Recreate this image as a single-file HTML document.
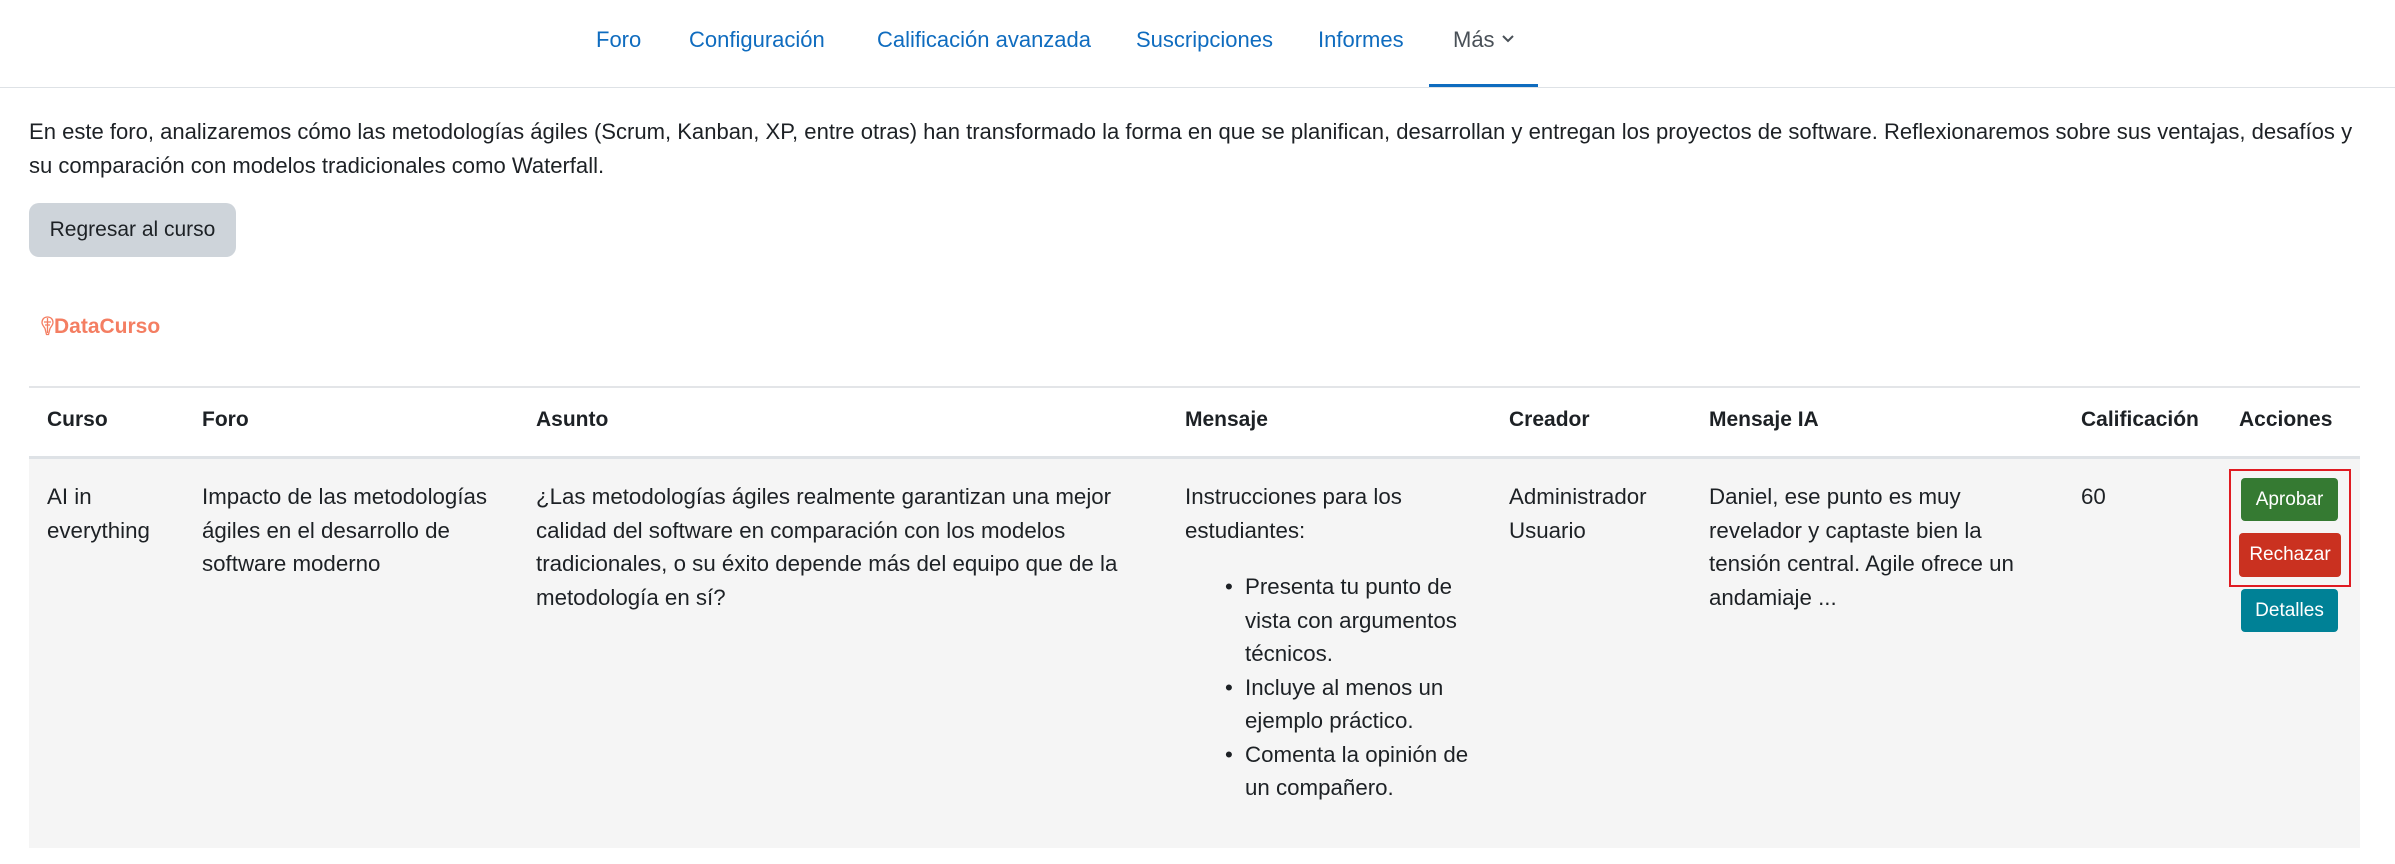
<!DOCTYPE html>
<html><head><meta charset="utf-8"><style>
body{margin:0;width:2395px;height:864px;background:#fff;font-family:"Liberation Sans",sans-serif;color:#1d2125;position:relative;overflow:hidden;font-size:21px}
.a{position:absolute;white-space:nowrap}
.nav{color:#0f6cbf;font-size:22px;top:27px}
.cell{position:absolute;font-size:22.3px;line-height:33.5px;white-space:nowrap}
.th{position:absolute;top:408px;font-weight:bold;font-size:21px}
.btn{position:absolute;color:#fff;font-size:19px;text-align:center;border-radius:4px;line-height:43px}
</style></head><body>
<div class="a nav" style="left:596px">Foro</div>
<div class="a nav" style="left:689px">Configuración</div>
<div class="a nav" style="left:877px">Calificación avanzada</div>
<div class="a nav" style="left:1136px">Suscripciones</div>
<div class="a nav" style="left:1318px">Informes</div>
<div class="a nav" style="left:1453px;color:#495057">Más <svg width="14" height="10" viewBox="0 0 14 10" style="vertical-align:3px"><path d="M2 2l5 5 5-5" stroke="#495057" stroke-width="2" fill="none"/></svg></div>
<div class="a" style="left:1429px;top:84px;width:109px;height:4px;background:#0f6cbf"></div>
<div class="a" style="left:0;top:87px;width:2395px;height:1px;background:#dee2e6"></div>

<div class="a" style="left:29px;top:115px;font-size:22.05px;line-height:33.5px">En este foro, analizaremos cómo las metodologías ágiles (Scrum, Kanban, XP, entre otras) han transformado la forma en que se planifican, desarrollan y entregan los proyectos de software. Reflexionaremos sobre sus ventajas, desafíos y<br>su comparación con modelos tradicionales como Waterfall.</div>
<div class="a" style="left:29px;top:203px;width:207px;height:54px;background:#ced4da;border-radius:10px;font-size:21px;line-height:54px;text-align:center">Regresar al curso</div>

<div class="a" style="left:41px;top:315px;color:#f47e62;font-weight:bold;font-size:21px"><svg width="13" height="20" viewBox="0 0 13 20" style="vertical-align:-3px"><path d="M6.5 1C3 1 1 3.5 1 6.5c0 2.5 2 4 3 6l1.5 6h2l1.5-6c1-2 3-3.5 3-6C12 3.5 10 1 6.5 1zM6.5 2v15M3 6h7M4 9h5" stroke="#f47e62" stroke-width="1.3" fill="none"/></svg>DataCurso</div>

<div class="a" style="left:29px;top:386px;width:2331px;height:2px;background:#e3e5e8"></div>
<div class="th" style="left:47px">Curso</div>
<div class="th" style="left:202px">Foro</div>
<div class="th" style="left:536px">Asunto</div>
<div class="th" style="left:1185px">Mensaje</div>
<div class="th" style="left:1509px">Creador</div>
<div class="th" style="left:1709px">Mensaje IA</div>
<div class="th" style="left:2081px">Calificación</div>
<div class="th" style="left:2239px">Acciones</div>
<div class="a" style="left:29px;top:456px;width:2331px;height:389px;background:#f5f5f5;border-top:3px solid #dee2e6"></div>

<div class="cell" style="left:47px;top:480px">AI in<br>everything</div>
<div class="cell" style="left:202px;top:480px">Impacto de las metodologías<br>ágiles en el desarrollo de<br>software moderno</div>
<div class="cell" style="left:536px;top:480px">¿Las metodologías ágiles realmente garantizan una mejor<br>calidad del software en comparación con los modelos<br>tradicionales, o su éxito depende más del equipo que de la<br>metodología en sí?</div>
<div class="cell" style="left:1185px;top:480px">Instrucciones para los<br>estudiantes:</div>
<div class="cell" style="left:1185px;top:570px">
<div style="position:absolute;left:40px;top:0">•</div>
<div style="position:absolute;left:40px;top:101px">•</div>
<div style="position:absolute;left:40px;top:168px">•</div>
<div style="position:absolute;left:60px;top:0">Presenta tu punto de<br>vista con argumentos<br>técnicos.<br>Incluye al menos un<br>ejemplo práctico.<br>Comenta la opinión de<br>un compañero.</div></div>
<div class="cell" style="left:1509px;top:480px">Administrador<br>Usuario</div>
<div class="cell" style="left:1709px;top:480px">Daniel, ese punto es muy<br>revelador y captaste bien la<br>tensión central. Agile ofrece un<br>andamiaje ...</div>
<div class="cell" style="left:2081px;top:480px">60</div>

<div class="a" style="left:2229px;top:469px;width:118px;height:114px;border:2px solid #e01b22"></div>
<div class="btn" style="left:2241px;top:478px;width:97px;background:#357a32">Aprobar</div>
<div class="btn" style="left:2239px;top:533px;width:102px;height:44px;background:#ca3120">Rechazar</div>
<div class="btn" style="left:2241px;top:589px;width:97px;background:#008196">Detalles</div>
</body></html>
